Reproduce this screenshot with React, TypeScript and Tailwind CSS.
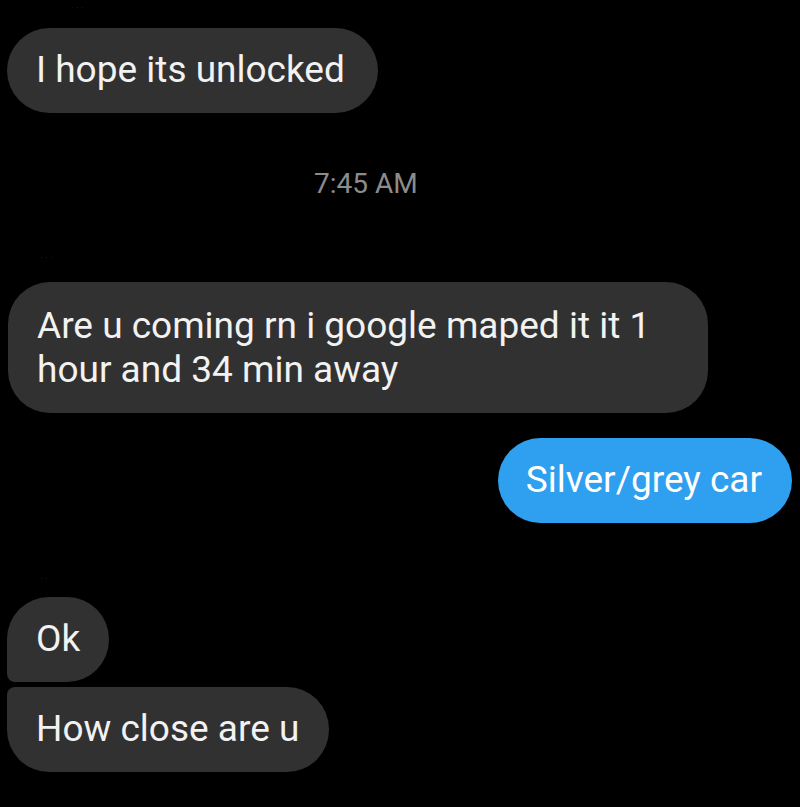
const Bubble = ({
  children,
  className,
}: {
  children: React.ReactNode;
  className?: string;
}) => {
  return (
    <div
      className={`bg-[#313131] pl-[29px] pt-[20px] pb-[21px] text-[37px] leading-[44px] text-[#f2f2f2] ${className ?? ''}`}
    >
      {children}
    </div>
  );
};

const App = () => {
  return (
    <div className="h-[807px] w-[800px] overflow-hidden bg-black font-['Roboto','Liberation_Sans',sans-serif]">
      <div className="flex flex-col pl-[7px]">
        <div className="ml-[64px] h-[28px] pt-[4px] text-[10px] leading-none text-[#1c1c1c]">
          · · ·
        </div>

        <Bubble className="w-fit rounded-full pr-[33px]">
          I hope its unlocked
        </Bubble>

        <div className="mt-[55px] ml-[307px] text-[28px] leading-[32px] text-[#8c8c8c]">
          7:45 AM
        </div>

        <div className="ml-[33px] mt-[54px] h-[28px] text-[10px] leading-none text-[#1c1c1c]">
          · · ·
        </div>

        <Bubble className="ml-px w-[700px] rounded-[42px] pt-[22px] pb-[18px] pr-[30px]">
          Are u coming rn i google maped it it 1
          <br />
          hour and 34 min away
        </Bubble>

        <div className="mr-[8px] mt-[25px] self-end rounded-full bg-[#2fa0ef] pt-[20px] pb-[21px] pl-[28px] pr-[30px] text-[37px] leading-[44px] text-white">
          Silver/grey car
        </div>

        <div className="ml-[33px] mt-[52px] h-[22px] text-[10px] leading-none text-[#1c1c1c]">
          · ·
        </div>

        <Bubble className="w-fit rounded-t-[42px] rounded-br-[42px] rounded-bl-[8px] pr-[29px]">
          Ok
        </Bubble>

        <Bubble className="mt-[5px] w-fit rounded-tl-[8px] rounded-tr-[42px] rounded-b-[42px] pr-[30px]">
          How close are u
        </Bubble>
      </div>
    </div>
  );
};

export default App;
